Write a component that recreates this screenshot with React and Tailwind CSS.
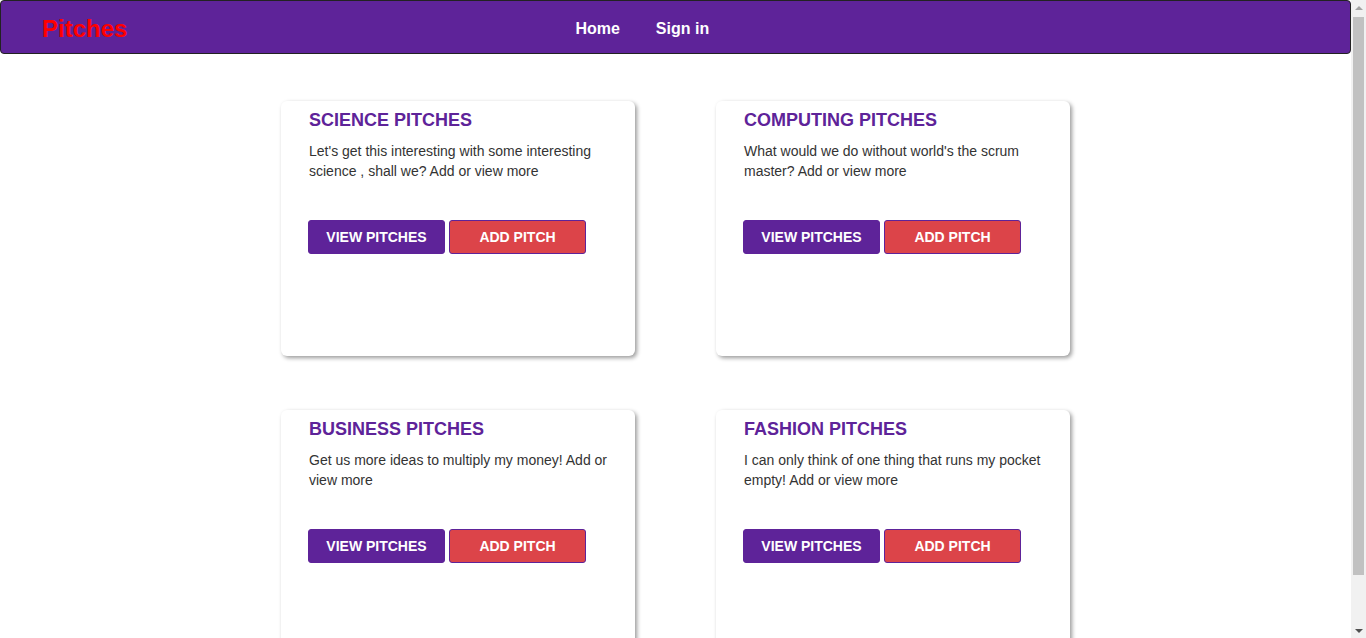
import React from "react";

const cards = [
  {
    title: "SCIENCE PITCHES",
    text: "Let's get this interesting with some interesting science , shall we? Add or view more",
  },
  {
    title: "COMPUTING PITCHES",
    text: "What would we do without world's the scrum master? Add or view more",
  },
  {
    title: "BUSINESS PITCHES",
    text: "Get us more ideas to multiply my money! Add or view more",
  },
  {
    title: "FASHION PITCHES",
    text: "I can only think of one thing that runs my pocket empty! Add or view more",
  },
];

function Card({ title, text }) {
  return (
    <div className="h-[255px] w-[354px] rounded-md bg-white shadow-[2px_2px_4px_rgba(0,0,0,0.4)] pl-[28px] pr-[20px] pt-[8px]">
      <h2 className="text-[18px] leading-[22px] font-bold text-[#5e2399]">{title}</h2>
      <p className="mt-[10px] text-[14px] leading-[20px] text-[#333]">{text}</p>
      <div className="-ml-[1px] mt-[39px] flex gap-[4px]">
        <button className="h-[34px] w-[137px] rounded-[3px] border border-[#5e2399] bg-[#5e2399] text-[14px] font-bold text-white">
          VIEW PITCHES
        </button>
        <button className="h-[34px] w-[137px] rounded-[3px] border border-[#5e2399] bg-[#dc4449] text-[14px] font-bold text-white">
          ADD PITCH
        </button>
      </div>
    </div>
  );
}

function Scrollbar() {
  return (
    <div className="flex h-[638px] w-[15px] shrink-0 flex-col items-center bg-[#f1f1f1]">
      <div className="flex h-[15px] w-full items-center justify-center">
        <div className="h-0 w-0 border-x-[4px] border-b-[4px] border-x-transparent border-b-[#a3a3a3]" />
      </div>
      <div className="mt-[2px] h-[558px] w-[11px] bg-[#c1c1c1]" />
      <div className="flex-1" />
      <div className="flex h-[15px] w-full items-center justify-center">
        <div className="h-0 w-0 border-x-[4px] border-t-[4px] border-x-transparent border-t-[#505050]" />
      </div>
    </div>
  );
}

export default function App() {
  return (
    <div className="flex h-[638px] overflow-hidden bg-white font-['Liberation_Sans',Arial,sans-serif]">
      <div className="min-w-0 flex-1">
        <nav className="flex h-[54px] items-center rounded-[4px] border border-[#222] bg-[#5e2399] pt-[3px]">
          <span className="ml-[41px] text-[24px] font-bold text-[#ff0000]">Pitches</span>
          <a className="ml-[448px] text-[16px] font-bold text-white">Home</a>
          <a className="ml-[36px] text-[16px] font-bold text-white">Sign in</a>
        </nav>
        <div className="mt-[47px] grid grid-cols-[354px_354px] justify-center gap-x-[81px] gap-y-[54px]">
          {cards.map((c) => (
            <Card key={c.title} {...c} />
          ))}
        </div>
      </div>
      <Scrollbar />
    </div>
  );
}
